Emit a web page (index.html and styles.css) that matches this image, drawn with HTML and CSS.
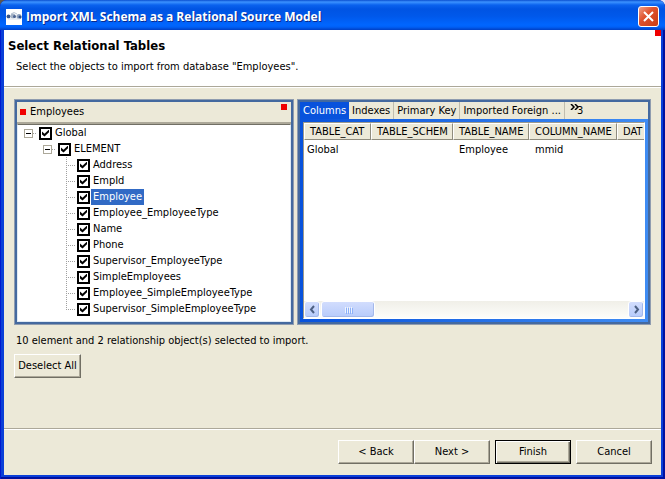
FILE: index.html
```
<!DOCTYPE html>
<html lang="en">
<head>
  <meta charset="UTF-8" />
  <meta name="viewport" content="width=device-width, initial-scale=1.0"/>
  <title>Import XML Schema as a Relational Source Model</title>
  <link rel="stylesheet" href="styles.css">
</head>
<body>

  <div class="window">
    <header class="titlebar">
      <svg class="app-icon" width="16" height="16" viewBox="0 0 16 16">
        <rect width="16" height="16" fill="#fff"/>
        <path d="M5 5l3-1.500 3 1.500" fill="none" stroke="#b8c4d4"/>
        <circle cx="2.500" cy="7.500" r="2" fill="#34548c"/>
        <circle cx="7" cy="7" r="2.500" fill="#a4b2c6"/>
        <circle cx="8.500" cy="7.500" r="1.500" fill="#4a6290"/>
        <circle cx="13" cy="7.500" r="2.500" fill="#8fa2bd"/>
        <circle cx="14" cy="8" r="1.500" fill="#2f4f88"/>
        <path d="M2 10h12" stroke="#d8dee8"/>
      </svg>
      <h1>Import XML Schema as a Relational Source Model</h1>
      <button class="close" type="button" aria-label="Close">
        <svg width="11" height="11" viewBox="0 0 11 11"><path d="M1 1l9 9M10 1l-9 9" stroke="#fff" stroke-width="2"/></svg>
      </button>
    </header>

    <main class="dialog">
      <div class="banner">
        <div>
          <h2>Select Relational Tables</h2>
          <p>Select the objects to import from database "Employees".</p>
        </div>
        <span class="marker"></span>
      </div>

      <div class="content">
        <div class="panels">
          <section class="panel">
            <div class="panel-head">
              <span class="marker"></span>
              <span class="panel-title">Employees</span>
              <span class="marker marker-end"></span>
            </div>
            <ul class="tree">
              <li>
                <div class="node"><span class="twig"><button class="toggle" type="button" aria-label="Collapse Global"></button></span><input type="checkbox" id="global" checked><label for="global">Global</label></div>
                <ul>
                  <li>
                    <div class="node"><span class="twig"><button class="toggle" type="button" aria-label="Collapse ELEMENT"></button></span><input type="checkbox" id="element" checked><label for="element">ELEMENT</label></div>
                    <ul>
                      <li class="node"><span class="twig leaf"></span><input type="checkbox" id="address" checked><label for="address">Address</label></li>
                      <li class="node"><span class="twig leaf"></span><input type="checkbox" id="empid" checked><label for="empid">EmpId</label></li>
                      <li class="node"><span class="twig leaf"></span><input type="checkbox" id="employee" checked><label class="selected" for="employee">Employee</label></li>
                      <li class="node"><span class="twig leaf"></span><input type="checkbox" id="employee-type" checked><label for="employee-type">Employee_EmployeeType</label></li>
                      <li class="node"><span class="twig leaf"></span><input type="checkbox" id="name" checked><label for="name">Name</label></li>
                      <li class="node"><span class="twig leaf"></span><input type="checkbox" id="phone" checked><label for="phone">Phone</label></li>
                      <li class="node"><span class="twig leaf"></span><input type="checkbox" id="supervisor-type" checked><label for="supervisor-type">Supervisor_EmployeeType</label></li>
                      <li class="node"><span class="twig leaf"></span><input type="checkbox" id="simple" checked><label for="simple">SimpleEmployees</label></li>
                      <li class="node"><span class="twig leaf"></span><input type="checkbox" id="employee-simple" checked><label for="employee-simple">Employee_SimpleEmployeeType</label></li>
                      <li class="node"><span class="twig leaf last"></span><input type="checkbox" id="supervisor-simple" checked><label for="supervisor-simple">Supervisor_SimpleEmployeeType</label></li>
                    </ul>
                  </li>
                </ul>
              </li>
            </ul>
          </section>

          <section class="panel">
            <div class="tabs">
              <button class="tab active" type="button">Columns</button>
              <button class="tab" type="button">Indexes</button>
              <button class="tab" type="button">Primary Key</button>
              <button class="tab" type="button">Imported Foreign ...</button>
              <button class="tab more" type="button" aria-label="3 more tabs">
                <svg width="9" height="6" viewBox="0 0 9 6"><path d="M1 0l3 3-3 3M5 0l3 3-3 3" fill="none" stroke="#000" stroke-width="1.500"/></svg><span>3</span>
              </button>
            </div>
            <div class="tab-body">
              <div class="grid">
                <div class="grid-view">
                  <table>
                    <colgroup>
                      <col class="col-cat"><col class="col-schem"><col class="col-table"><col class="col-column"><col class="col-data">
                    </colgroup>
                    <thead>
                      <tr><th>TABLE_CAT</th><th>TABLE_SCHEM</th><th>TABLE_NAME</th><th>COLUMN_NAME</th><th>DAT</th></tr>
                    </thead>
                    <tbody>
                      <tr><td>Global</td><td></td><td>Employee</td><td>mmid</td><td></td></tr>
                    </tbody>
                  </table>
                </div>
                <div class="scrollbar">
                  <button class="scroll-btn" type="button" aria-label="Scroll left"><svg width="7" height="9" viewBox="0 0 7 9"><path d="M5 1L2 4.500 5 8" fill="none" stroke="#4d6185" stroke-width="2"/></svg></button>
                  <div class="thumb"><i></i><i></i><i></i><i></i></div>
                  <button class="scroll-btn scroll-end" type="button" aria-label="Scroll right"><svg width="7" height="9" viewBox="0 0 7 9"><path d="M2 1l3 3.500L2 8" fill="none" stroke="#4d6185" stroke-width="2"/></svg></button>
                </div>
              </div>
            </div>
          </section>
        </div>

        <p class="status">10 element and 2 relationship object(s) selected to import.</p>
        <button class="btn btn-small" type="button">Deselect All</button>
      </div>

      <footer class="actions">
        <div class="pair">
          <button class="btn" type="button">&lt; Back</button>
          <button class="btn" type="button">Next &gt;</button>
        </div>
        <button class="btn default" type="button">Finish</button>
        <button class="btn" type="button">Cancel</button>
      </footer>
    </main>
  </div>

</body>
</html>
```
FILE: styles.css
```
* {
  box-sizing: border-box;
}

body {
  margin: 0;
  background: linear-gradient(90deg, #5c5850 50%, #e4e4f4 50%);
  color: #000;
  font: 11px/16px Tahoma, "DejaVu Sans Condensed", "DejaVu Sans", sans-serif;
}

h1, h2, p, ul {
  margin: 0;
  padding: 0;
}

button {
  margin: 0;
  padding: 0;
  border: none;
  color: inherit;
  font: inherit;
}

svg {
  display: block;
}

.window {
  display: flex;
  flex-direction: column;
  min-height: 100vh;
  padding: 0 4px 4px;
  background: #0a3fd8;
  border-radius: 7px 7px 0 0;
  box-shadow: inset 1px 0 #0019cf, inset -2px -2px #0010a0;
}

/* title bar */
.titlebar {
  display: flex;
  align-items: center;
  height: 30px;
  margin: 0 -4px;
  padding: 3px 6px 0;
  border-radius: 7px 7px 0 0;
  background: linear-gradient(#0a4fd0 0, #3c92ff 2px, #0a62ee 5px, #0054e3 9px, #0058ea 16px, #0066ff 25px, #0060f6 27px, #003fc4 30px);
}

.titlebar h1 {
  flex: 1;
  margin-left: 4px;
  color: #fff;
  font: bold 12px/16px "Trebuchet MS", "Open Sans", sans-serif;
  text-shadow: 1px 1px #0a2a8c;
}

.close {
  display: flex;
  align-items: center;
  justify-content: center;
  width: 21px;
  height: 21px;
  border: 1px solid #fff;
  border-radius: 3px;
  background: linear-gradient(135deg, #f0a088, #e0532e 40%, #c83c14);
}

.marker {
  width: 6px;
  height: 6px;
  background: #f00000;
}

/* dialog */
.dialog {
  flex: 1;
  display: flex;
  flex-direction: column;
  background: #ece9d8;
}

.banner {
  display: flex;
  justify-content: space-between;
  height: 57px;
  padding-left: 4px;
  background: #fff;
  border-bottom: 1px solid #aca899;
}

.banner h2 {
  padding-top: 8px;
  font-size: 13px;
  line-height: 16px;
}

.banner p {
  margin: 5px 0 0 8px;
}

.content {
  flex: 1;
  padding: 11px 10px;
  border-top: 1px solid #fff;
}

.panels {
  display: grid;
  grid-template-columns: 280fr 354fr;
  gap: 3px;
}

.panel {
  display: flex;
  flex-direction: column;
  min-width: 0;
  border: 1px solid #8f9caf;
  outline: 2px solid #44699f;
  outline-offset: -3px;
  padding: 2px;
}

.panel-head {
  display: flex;
  align-items: center;
  height: 22px;
  padding: 0 4px 0 3px;
  border-bottom: 2px solid #aca899;
}

.panel-title {
  flex: 1;
  margin-left: 4px;
}

.marker-end {
  align-self: flex-start;
  margin-top: 2px;
}

/* tree */
.tree {
  flex: 1;
  padding: 0 0 4px 6px;
  background: #fff;
  border: 1px solid #dfeaf4;
  border-top-color: #716f64;
}

.tree ul {
  padding-left: 19px;
}

.tree li {
  list-style: none;
}

.node {
  display: flex;
  align-items: center;
  height: 16px;
}

.twig {
  width: 15px;
  height: 16px;
  padding-top: 4px;
  background: repeating-linear-gradient(90deg, #a0a0a0 0 1px, transparent 1px 2px) 9px 8px / 4px 1px no-repeat;
}

.leaf {
  background:
    repeating-linear-gradient(#a0a0a0 0 1px, transparent 1px 2px) 4px 0 / 1px 16px no-repeat,
    repeating-linear-gradient(90deg, #a0a0a0 0 1px, transparent 1px 2px) 4px 8px / 9px 1px no-repeat;
}

.last {
  background-size: 1px 9px, 9px 1px;
}

.toggle {
  display: block;
  width: 9px;
  height: 9px;
  border: 1px solid #aca899;
  background: linear-gradient(#000, #000) center / 5px 1px no-repeat #fff;
}

.node input {
  appearance: none;
  width: 13px;
  height: 13px;
  margin: 0;
  border: 2px solid #000;
  background: #fff;
}

.node input:checked::before {
  content: "";
  display: block;
  width: 7px;
  height: 7px;
  margin: 1px;
  background: #000;
  clip-path: polygon(0 29%, 36% 60%, 100% 0, 100% 40%, 36% 100%, 0 70%);
}

.node label {
  margin-left: 1px;
  padding: 0 2px;
}

.node .selected {
  background: #316ac5;
  color: #fff;
}

/* tabs */
.tabs {
  display: flex;
  height: 17px;
}

.tab {
  padding: 0 3px;
  border-right: 1px solid #c0bdae;
  background: #ece9d8;
  white-space: nowrap;
}

.tab.active {
  background: #0852dc;
  color: #fff;
  border-right: none;
}

.tab.more {
  display: flex;
  flex: 1;
  align-items: center;
  padding-left: 5px;
  border-right: none;
}

.more svg {
  margin: 0 -2px 8px 0;
}

.tab-body {
  flex: 1;
  display: flex;
  padding: 3px;
  background: linear-gradient(90deg, #0852dc, #3f8cf3);
}

.grid {
  flex: 1;
  display: flex;
  flex-direction: column;
  min-width: 0;
  border: 1px solid #fff;
  border-top-color: #9d9a8c;
  border-left-color: #9d9a8c;
  background: #fff;
}

.grid-view {
  flex: 1;
  overflow: hidden;
}

table {
  width: 400px;
  table-layout: fixed;
  border-collapse: separate;
  border-spacing: 0;
}

.col-cat {
  width: 67px;
}

.col-schem {
  width: 82px;
}

.col-table {
  width: 76px;
}

.col-column {
  width: 88px;
}

th {
  height: 17px;
  padding: 0 0 0 5px;
  border: 1px solid #fff;
  border-right-color: #8f8c7e;
  border-bottom-color: #8f8c7e;
  background: #ece9d8;
  font-weight: normal;
  line-height: 15px;
  text-align: left;
}

td {
  padding: 2px 0 0 6px;
}

td:first-child {
  padding-left: 3px;
}

.scrollbar {
  display: flex;
  gap: 1px;
  height: 17px;
  background: linear-gradient(#f0efe8, #fdfdfa);
}

.scroll-btn,
.thumb {
  display: flex;
  align-items: center;
  justify-content: center;
  width: 16px;
  border: 1px solid #fff;
  border-radius: 3px;
  background: linear-gradient(#d2ddfd, #b7cbfb);
  box-shadow: inset -1px -1px #a3b8ea;
}

.scroll-end {
  margin-left: auto;
}

.thumb {
  gap: 1px;
  width: 54px;
}

.thumb i {
  width: 1px;
  height: 6px;
  background: #eef4fe;
  box-shadow: 1px 1px #8cb0f8;
}

.status {
  margin: 8px 2px 5px;
}

/* buttons */
.btn {
  width: 76px;
  height: 24px;
  background: #ece9d8;
  border: 1px solid #fff;
  border-right-color: #716f64;
  border-bottom-color: #716f64;
  box-shadow: inset -1px -1px #aca899;
}

.btn-small {
  width: 67px;
}

.btn.default {
  border-color: #000;
  box-shadow: inset 1px 1px #fff, inset -1px -1px #716f64, inset -2px -2px #aca899;
}

.actions {
  display: flex;
  justify-content: flex-end;
  gap: 5px;
  height: 47px;
  padding: 11px 9px 0;
  border-top: 1px solid #aca899;
  box-shadow: inset 0 1px #fff;
}

.pair {
  display: flex;
}
```
